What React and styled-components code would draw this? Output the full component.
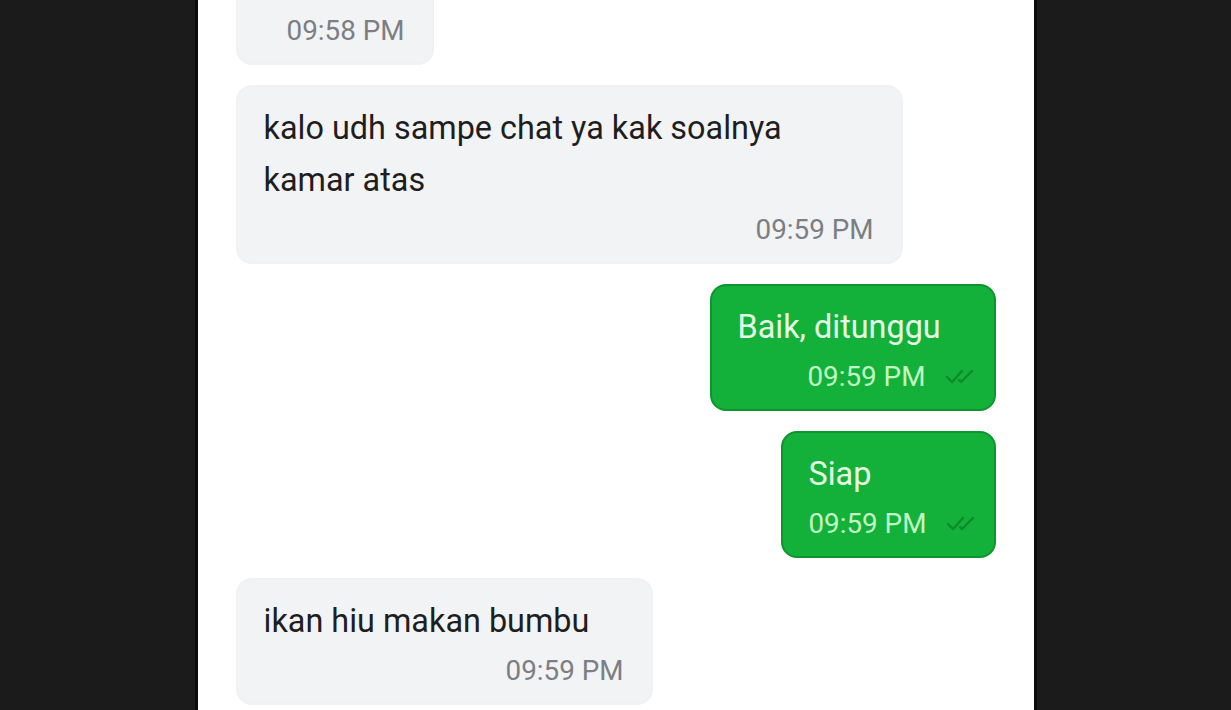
import React from 'react'
import styled, { createGlobalStyle } from 'styled-components'

const Global = createGlobalStyle`
  html, body {
    margin: 0;
    height: 100%;
    background: #1b1b1b;
    overflow: hidden;
  }
  #root { height: 100%; }
`;

const Page = styled.div`
  height: 100%;
  display: flex;
  justify-content: center;
`;

const Panel = styled.div`
  width: 836px;
  height: 100%;
  background: #ffffff;
  box-shadow: 0 0 0 3px #0c0c0c;
  padding: 0 38px;
  box-sizing: border-box;
  display: flex;
  flex-direction: column;
  gap: 20px;
  overflow: hidden;
  font-family: Roboto, "Liberation Sans", sans-serif;
`;

const Row = styled.div`
  display: flex;
  justify-content: ${p => (p.$mine ? 'flex-end' : 'flex-start')};
  margin-top: ${p => p.$offset || 0}px;
`;

const Bubble = styled.div`
  width: ${p => p.$w}px;
  box-sizing: border-box;
  padding: 15px 27px 15px 26px;
  padding-right: ${p => (p.$mine ? 20 : 27)}px;
  border-radius: 16px;
  background: ${p => (p.$mine ? '#13b139' : '#f2f3f5')};
  border: 2px solid ${p => (p.$mine ? '#0f9430' : '#eff1f2')};
  display: flex;
  flex-direction: column;
  gap: 5px;
`;

const Text = styled.div`
  font-size: 32.4px;
  line-height: 52px;
  white-space: nowrap;
  color: ${p => (p.$mine ? '#e6fde6' : '#1e1e1e')};
`;

const Meta = styled.div`
  display: flex;
  align-items: center;
  justify-content: ${p => (p.$mine ? 'flex-start' : 'flex-end')};
  padding-left: ${p => p.$indent || 0}px;
  gap: 20px;
  height: 36px;
  white-space: nowrap;
`;

const Time = styled.span`
  font-size: 27.8px;
  flex-shrink: 0;
  color: ${p => (p.$mine ? '#c2f7c6' : '#7b7f83')};
`;

const TickIcon = styled.svg`
  flex-shrink: 0;
`;

const Ticks = () => (
  <TickIcon width="30" height="18" viewBox="0 0 30 18" fill="none" stroke="#0c8a2a" strokeWidth="2.4" strokeLinecap="round" strokeLinejoin="round">
    <path d="M2 10 L7 15 L17 4" />
    <path d="M14 13 L16 15 L27 4" />
  </TickIcon>
);

const messages = [
  { mine: false, w: 198, time: '09:58 PM', lines: ['\u00a0'], offset: -62 },
  { mine: false, w: 667, time: '09:59 PM', lines: ['kalo udh sampe chat ya kak soalnya', 'kamar atas'] },
  { mine: true, w: 286, time: '09:59 PM', lines: ['Baik, ditunggu'], indent: 70 },
  { mine: true, w: 215, time: '09:59 PM', lines: ['Siap'] },
  { mine: false, w: 417, time: '09:59 PM', lines: ['ikan hiu makan bumbu'] },
];

export default function App() {
  return (
    <>
      <Global />
      <Page>
        <Panel>
          {messages.map((m, i) => (
            <Row key={i} $mine={m.mine} $offset={m.offset}>
              <Bubble $mine={m.mine} $w={m.w}>
                <Text $mine={m.mine}>
                  {m.lines.map((l, j) => (
                    <div key={j}>{l}</div>
                  ))}
                </Text>
                <Meta $mine={m.mine} $indent={m.indent}>
                  <Time $mine={m.mine}>{m.time}</Time>
                  {m.mine && <Ticks />}
                </Meta>
              </Bubble>
            </Row>
          ))}
        </Panel>
      </Page>
    </>
  )
}
